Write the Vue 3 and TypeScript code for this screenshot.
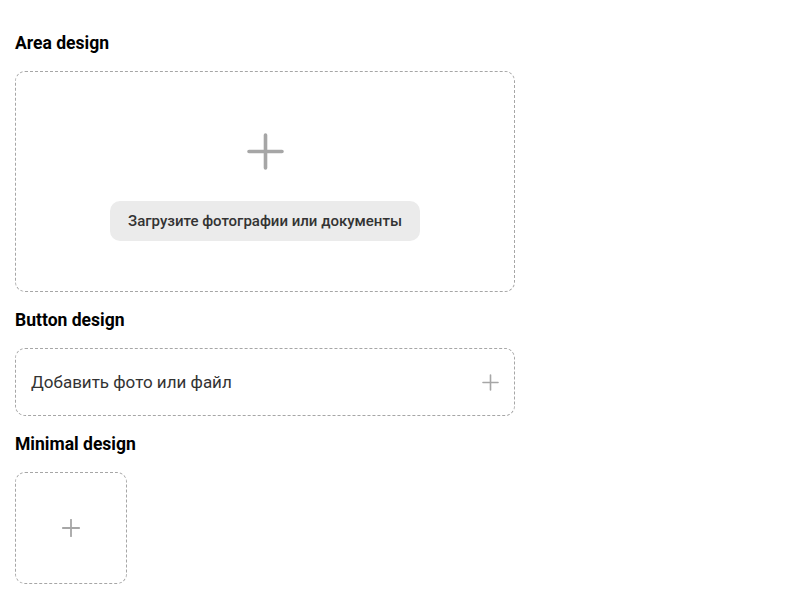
<script setup lang="ts">
const areaLabel: string = 'Загрузите фотографии или документы'
const buttonLabel: string = 'Добавить фото или файл'
</script>

<template>
  <main class="page">
    <section>
      <h3 class="title">Area design</h3>
      <div class="drop area">
        <svg class="plus-large" viewBox="0 0 38 38" aria-hidden="true">
          <path d="M19.5 3v33M3 19.5h33" />
        </svg>
        <button type="button" class="upload">{{ areaLabel }}</button>
      </div>
    </section>
    <section>
      <h3 class="title">Button design</h3>
      <button type="button" class="drop row">
        <span>{{ buttonLabel }}</span>
        <svg class="plus-small" viewBox="0 0 17 17" aria-hidden="true">
          <path d="M8.5 1v15M1 8.5h15" />
        </svg>
      </button>
    </section>
    <section>
      <h3 id="minimal-title" class="title">Minimal design</h3>
      <button type="button" class="drop tile" aria-labelledby="minimal-title">
        <svg class="plus-medium" viewBox="0 0 18 18" aria-hidden="true">
          <path d="M9 .75v16.5M.75 9h16.5" />
        </svg>
      </button>
    </section>
  </main>
</template>

<style>
body {
  margin: 0;
  background: #fff;
}
</style>

<style scoped>
.page {
  box-sizing: border-box;
  max-width: 530px;
  padding: 15px;
  font-family: Roboto, sans-serif;
  font-size: 15px;
  color: #000;
}

.title {
  margin: 18px 0;
  line-height: 20px;
}

.drop {
  box-sizing: border-box;
  display: flex;
  align-items: center;
  border: 1px dashed #a6a6a6;
  border-radius: 10px;
  background: #fff;
  font-family: inherit;
}

.area {
  flex-direction: column;
  gap: 31px;
  padding: 60px 15px 50px;
}

.upload {
  height: 40px;
  padding: 0 18px;
  border: 0;
  border-radius: 10px;
  background: #ebebeb;
  color: #333;
  font-family: inherit;
  font-size: 15px;
  font-weight: 500;
}

.row {
  width: 100%;
  height: 68px;
  justify-content: space-between;
  padding: 0 15px;
  color: #333;
  font-size: 17px;
}

.tile {
  width: 112px;
  height: 112px;
  justify-content: center;
  padding: 0;
}

svg {
  fill: none;
  stroke: #a6a6a6;
  stroke-linecap: round;
}

.plus-large {
  width: 38px;
  height: 38px;
  stroke-width: 3.6;
}

.plus-small {
  width: 17px;
  height: 17px;
  stroke-width: 1.6;
}

.plus-medium {
  width: 18px;
  height: 18px;
  stroke-width: 1.8;
}
</style>
